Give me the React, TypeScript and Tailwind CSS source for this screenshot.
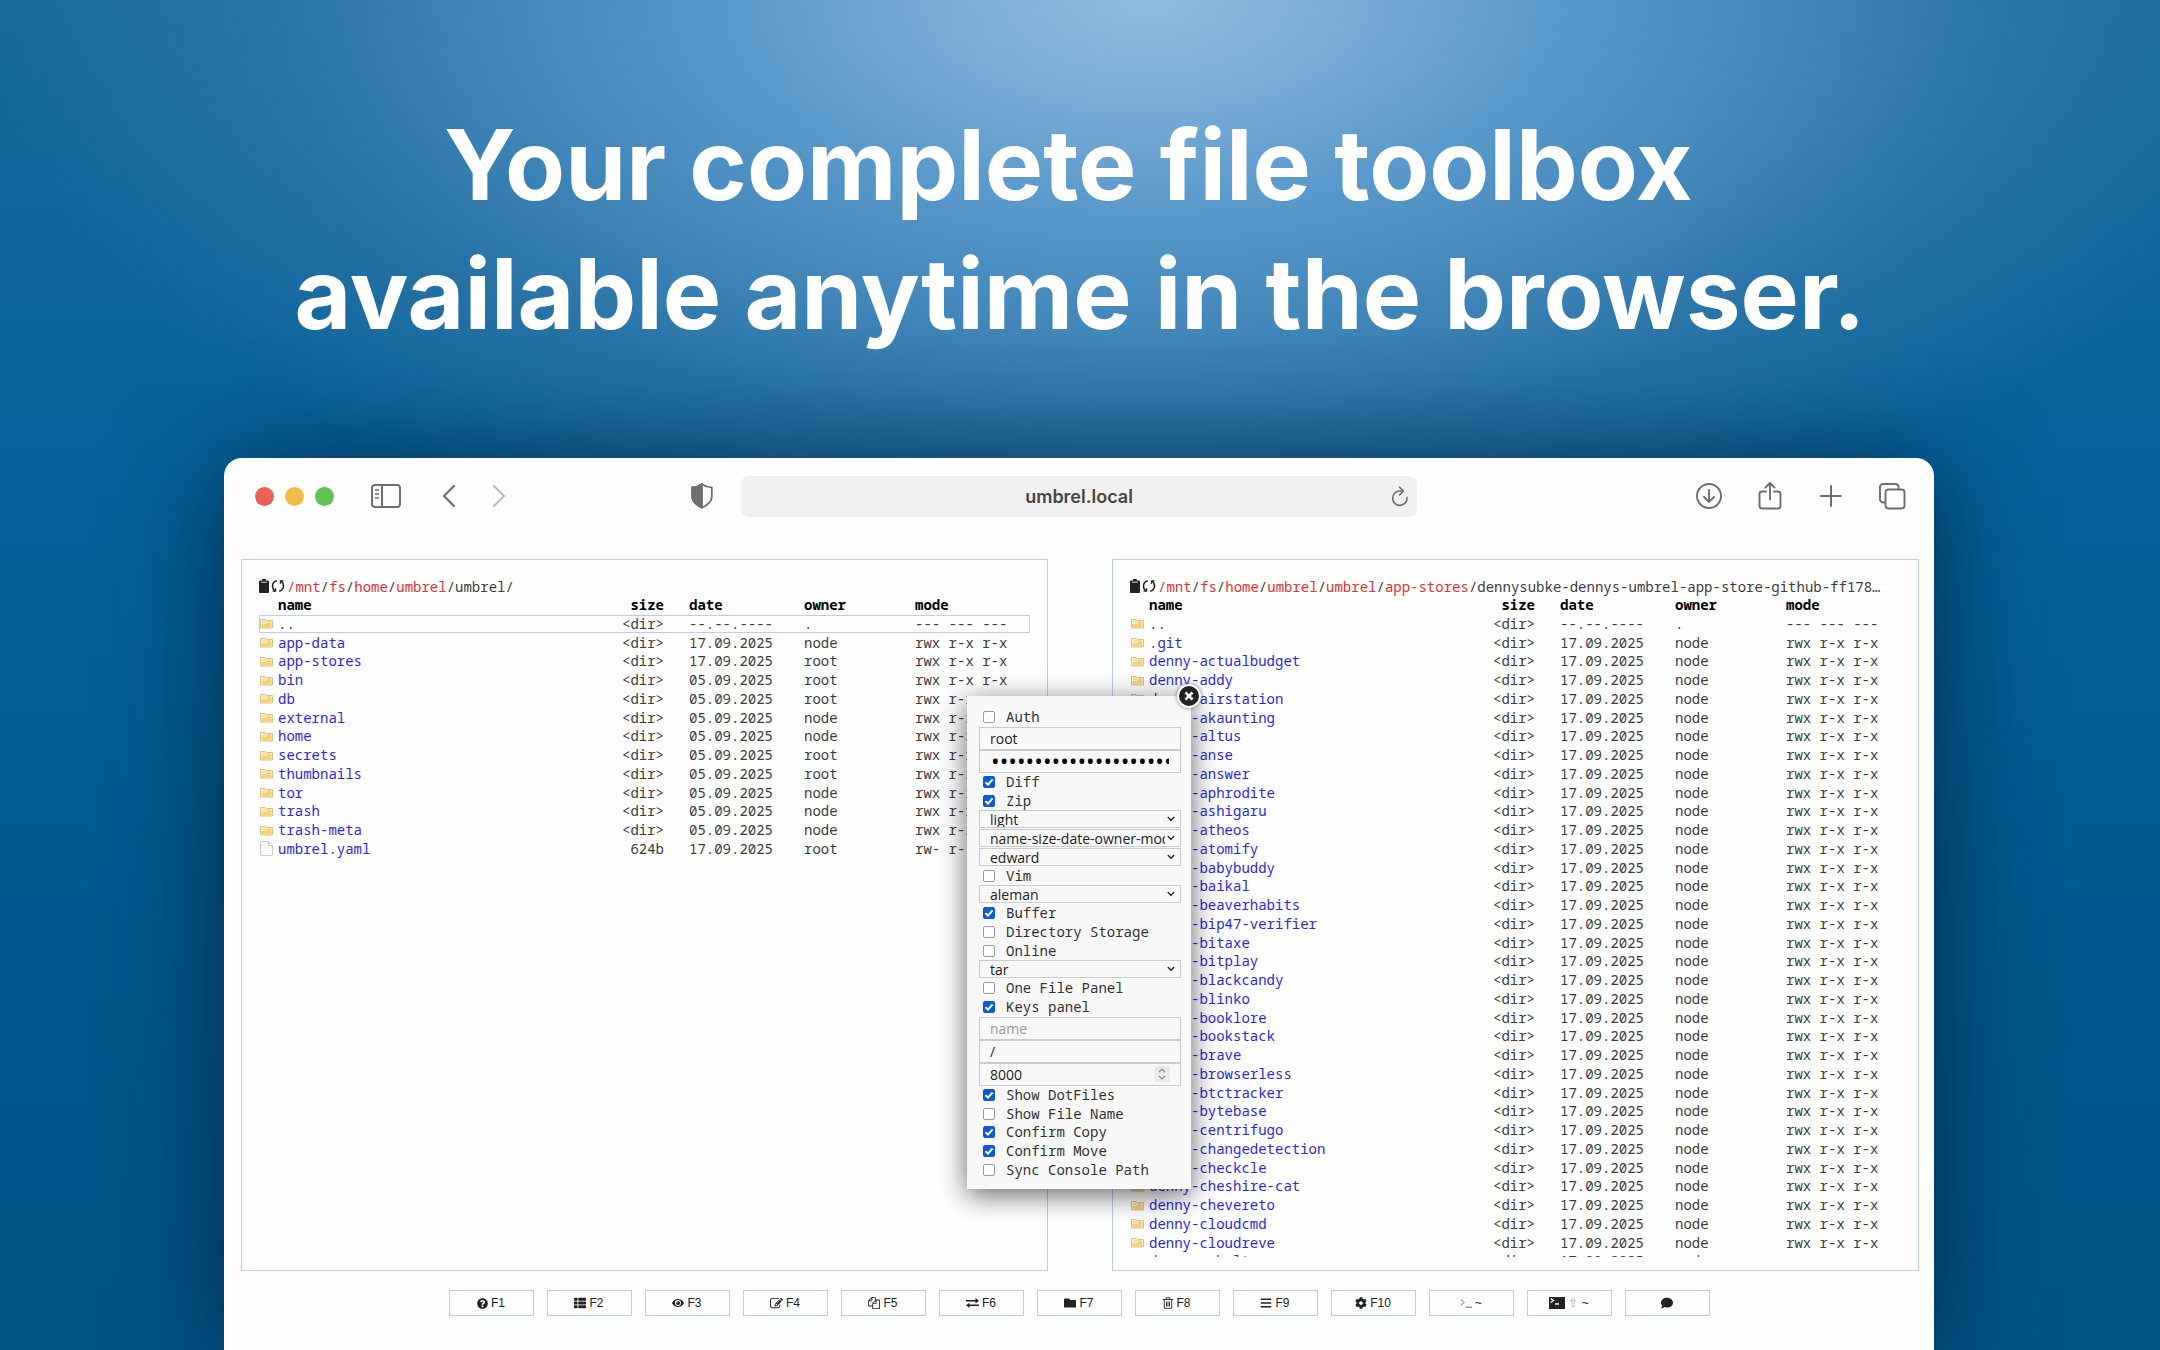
import type { ReactNode } from "react";
import { FaBars, FaCog, FaComment, FaEye, FaFolder, FaQuestionCircle, FaThList } from "react-icons/fa";

type Entry = { name: string; size: string; date: string; owner: string; mode: string };

const parent: Entry = { name: "..", size: "<dir>", date: "--.--.----", owner: ".", mode: "--- --- ---" };

const dir = (name: string, date: string, owner: string): Entry => ({
  name,
  size: "<dir>",
  date,
  owner,
  mode: "rwx r-x r-x",
});

const leftFiles: Entry[] = [
  parent,
  dir("app-data", "17.09.2025", "node"),
  dir("app-stores", "17.09.2025", "root"),
  dir("bin", "05.09.2025", "root"),
  dir("db", "05.09.2025", "root"),
  dir("external", "05.09.2025", "node"),
  dir("home", "05.09.2025", "node"),
  dir("secrets", "05.09.2025", "root"),
  dir("thumbnails", "05.09.2025", "root"),
  dir("tor", "05.09.2025", "node"),
  dir("trash", "05.09.2025", "node"),
  dir("trash-meta", "05.09.2025", "node"),
  { name: "umbrel.yaml", size: "624b", date: "17.09.2025", owner: "root", mode: "rw- r-- r--" },
];

const apps = [
  "actualbudget", "addy", "airstation", "akaunting", "altus", "anse", "answer", "aphrodite", "ashigaru",
  "atheos", "atomify", "babybuddy", "baikal", "beaverhabits", "bip47-verifier", "bitaxe", "bitplay",
  "blackcandy", "blinko", "booklore", "bookstack", "brave", "browserless", "btctracker", "bytebase",
  "centrifugo", "changedetection", "checkcle", "cheshire-cat", "chevereto", "cloudcmd", "cloudreve", "cobalt",
];

const rightFiles: Entry[] = [
  parent,
  dir(".git", "17.09.2025", "node"),
  ...apps.map((app) => dir("denny-" + app, "17.09.2025", "node")),
];

function FolderIcon() {
  return (
    <svg viewBox="0 0 13 11" className="h-[11px] w-[13px]" aria-hidden="true">
      <path d="M.5 10V1.500h4.800l1 1h6.200V10z" fill="#fdf0c8" stroke="#dcc08a" />
      <path d="M1.500 9.500V6h4l1.200-1.300h4.800v4.800z" fill="#f3d27a" />
      <path d="M2.500 4h3.200M7 4h4" stroke="#e2b95c" strokeWidth=".8" />
    </svg>
  );
}

function DocumentIcon() {
  return (
    <svg viewBox="0 0 13 15" className="h-[15px] w-[13px]" aria-hidden="true">
      <path d="M.5 1.500a1 1 0 0 1 1-1h7l4 4v9a1 1 0 0 1-1 1h-10a1 1 0 0 1-1-1z" fill="#f9fafa" stroke="#c9cccd" />
      <path d="M8.500.5v4h4" fill="#eceeee" stroke="#c9cccd" />
    </svg>
  );
}

function ClipboardIcon() {
  return (
    <svg viewBox="0 0 10 14" className="h-[14px] w-[10px]" fill="#222" aria-hidden="true">
      <path d="M1 1.500h2V1a1 1 0 0 1 1-1h2a1 1 0 0 1 1 1v.5h2a1 1 0 0 1 1 1V13a1 1 0 0 1-1 1H1a1 1 0 0 1-1-1V2.500a1 1 0 0 1 1-1z" />
      <path d="M2 3.200h6" stroke="#fff" strokeWidth=".8" />
    </svg>
  );
}

function RefreshIcon() {
  return (
    <svg viewBox="0 0 14 14" className="size-[14px]" fill="none" stroke="#222" strokeWidth="1.500" aria-hidden="true">
      <path d="M5.800 1.700C.8 3 .2 8.800 3.800 11.800M8.200 12.300C13.200 11 13.800 5.200 10.200 2.200" />
      <path d="M1.600 12.200h3V9.200M12.400 1.800h-3v3" strokeWidth="1.200" />
    </svg>
  );
}

const rowGrid =
  "grid h-[1.25em] grid-cols-[19px_minmax(0,1fr)_60px_140px_111px_115px] items-center whitespace-pre text-left";

function Panel({ path, current, files, selected }: { path: string[]; current: string; files: Entry[]; selected?: number }) {
  return (
    <section className="min-h-0 min-w-0 border border-[#b9cdf3] px-[17px] pt-[17px] pb-[13px]">
      <div className="h-full overflow-hidden font-['Noto_Sans_Mono','DejaVu_Sans_Mono',monospace] text-[15px] text-[#3c3c3c]">
        <div className="flex h-[1.25em] items-center overflow-hidden whitespace-nowrap">
          <button type="button" aria-label="Copy path"><ClipboardIcon /></button>
          <button type="button" aria-label="Refresh" className="mx-0.5"><RefreshIcon /></button>
          <span className="text-[14px]">
            <a href="#root" className="text-[#e03030]">/{path[0]}</a>
            {path.slice(1).map((part, i) => (
              <span key={i}>/<a href={"#" + part} className="text-[#e03030]">{part}</a></span>
            ))}
            /{current}
          </span>
        </div>
        <table className="block w-full">
          <thead className="block text-black">
            <tr className={rowGrid}>
              <td />
              <th className="text-[14px] leading-none">name</th>
              <th className="text-right text-[14px] leading-none">size</th>
              <th className="pl-[25px] text-[14px] leading-none">date</th>
              <th className="text-[14px] leading-none">owner</th>
              <th className="text-[14px] leading-none">mode</th>
            </tr>
          </thead>
          <tbody className="block">
            {files.map((file, i) => (
              <tr key={file.name} className={i === selected ? rowGrid + " outline -outline-offset-1 outline-[#b9cdf3]" : rowGrid}>
                <td className="pl-px">{file.size === "<dir>" ? <FolderIcon /> : <DocumentIcon />}</td>
                <td className="text-[14px] leading-none"><a href={"#" + file.name} className="text-[#3026dc]">{file.name}</a></td>
                <td className="text-right text-[14px] leading-none">{file.size}</td>
                <td className="pl-[25px] text-[14px] leading-none">{file.date}</td>
                <td className="text-[14px] leading-none">{file.owner}</td>
                <td className="text-[14px] leading-none">{file.mode}</td>
              </tr>
            ))}
          </tbody>
        </table>
      </div>
    </section>
  );
}

function Check({ label, checked }: { label: string; checked?: boolean }) {
  return (
    <label className="flex h-[1.25em] items-center pl-1">
      <span className="relative mr-[11px] size-3">
        <input
          type="checkbox"
          defaultChecked={checked}
          className="peer block size-3 appearance-none rounded-[2px] border border-[#9a9a9a] bg-white checked:border-[#0b5bd8] checked:bg-[#0b5bd8]"
        />
        <svg viewBox="0 0 12 12" className="pointer-events-none absolute inset-0 hidden size-3 peer-checked:block" fill="none" stroke="#fff" strokeWidth="2" aria-hidden="true">
          <path d="M2.500 6.200 5 8.600l4.600-5.300" />
        </svg>
      </span>
      <span className="font-['Noto_Sans_Mono','DejaVu_Sans_Mono',monospace] text-[14px] leading-none whitespace-nowrap">{label}</span>
    </label>
  );
}

function Choice({ label, value }: { label: string; value: string }) {
  return (
    <div className="relative h-[1.25em]">
      <select aria-label={label} className="block h-[18px] w-full appearance-none border border-[#c9cbcd] bg-[#f8f8f8] pr-[15px] pl-[10px] text-[14px] leading-[18px] text-[#222]">
        <option>{value}</option>
      </select>
      <svg viewBox="0 0 8 6" className="pointer-events-none absolute top-[6px] right-[6px] h-[6px] w-[8px]" fill="none" stroke="#222" strokeWidth="1.300" aria-hidden="true">
        <path d="M.8 1 4 4.300 7.200 1" />
      </svg>
    </div>
  );
}

const field = "block h-[23px] w-full border border-[#c9cbcd] bg-[#f8f8f8] px-[10px] text-[14px] text-[#222] placeholder:text-[#999]";

function SettingsDialog() {
  return (
    <form
      aria-label="Configuration"
      className="absolute top-[137px] left-1/2 w-56 -translate-x-1/2 bg-[#f8f8f8] pt-3 pr-[10px] pb-[10px] pl-3 font-['Open_Sans','Noto_Sans',sans-serif] text-[15px] text-[#333] shadow-[0_6px_26px_rgba(0,0,0,0.6)]"
    >
      <button type="button" aria-label="Close" className="absolute -top-3 -right-[10px] grid size-6 place-items-center rounded-full bg-white shadow-[0_0_4px_rgba(0,0,0,0.5)]">
        <svg viewBox="0 0 20 20" className="size-5" aria-hidden="true">
          <circle cx="10" cy="10" r="10" fill="#222" />
          <path d="m6.500 6.500 7 7m0-7-7 7" stroke="#fff" strokeWidth="2.600" />
        </svg>
      </button>
      <Check label="Auth" />
      <input aria-label="Username" type="text" defaultValue="root" className={field} />
      <input
        aria-label="Password"
        type="password"
        defaultValue="0123456789012345678901234567890123456789"
        className="block h-[23px] w-full border border-[#c9cbcd] bg-[#f8f8f8] px-[11px] text-[23px] text-black"
      />
      <Check label="Diff" checked />
      <Check label="Zip" checked />
      <Choice label="Theme" value="light" />
      <Choice label="Columns" value="name-size-date-owner-mode" />
      <Choice label="Editor" value="edward" />
      <Check label="Vim" />
      <Choice label="Menu" value="aleman" />
      <Check label="Buffer" checked />
      <Check label="Directory Storage" />
      <Check label="Online" />
      <Choice label="Packer" value="tar" />
      <Check label="One File Panel" />
      <Check label="Keys panel" checked />
      <input aria-label="Name" type="text" placeholder="name" className={field} />
      <input aria-label="Root" type="text" defaultValue="/" className={field} />
      <div className="relative">
        <input aria-label="Port" type="number" defaultValue="8000" className={field + " [appearance:textfield]"} />
        <svg viewBox="0 0 16 16" className="pointer-events-none absolute top-[3px] right-[11px] size-4" fill="none" stroke="#8a8a8a" strokeWidth="1.200" aria-hidden="true">
          <path d="M0 0h16v16H0z" fill="#ebebed" stroke="none" />
          <path d="m5 6 3-3 3 3M5 10l3 3 3-3" />
        </svg>
      </div>
      <Check label="Show DotFiles" checked />
      <Check label="Show File Name" />
      <Check label="Confirm Copy" checked />
      <Check label="Confirm Move" checked />
      <Check label="Sync Console Path" />
    </form>
  );
}

function EditIcon() {
  return (
    <svg viewBox="0 0 1792 1792" className="size-[13px]" fill="currentColor" aria-hidden="true">
      <path d="M888 1184l116-116-152-152-116 116v56h96v96h56zm440-720q-16-16-33 1l-350 350q-17 17-1 33t33-1l350-350q17-17 1-33zm80 594v190q0 119-84.500 203.500t-203.500 84.500h-832q-119 0-203.500-84.500t-84.500-203.500v-832q0-119 84.500-203.500t203.500-84.500h832q63 0 117 25 15 7 18 23 3 17-9 29l-49 49q-14 14-32 8-23-6-45-6h-832q-66 0-113 47t-47 113v832q0 66 47 113t113 47h832q66 0 113-47t47-113v-126q0-13 9-22l64-64q15-15 35-7t20 29zm-96-738l288 288-672 672h-288v-288zm444 132l-92 92-288-288 92-92q28-28 68-28t68 28l152 152q28 28 28 68t-28 68z" />
    </svg>
  );
}

function CopyIcon() {
  return (
    <svg viewBox="0 0 1792 1792" className="size-[12px]" fill="currentColor" aria-hidden="true">
      <path d="M1696 384q40 0 68 28t28 68v1216q0 40-28 68t-68 28h-960q-40 0-68-28t-28-68v-288h-544q-40 0-68-28t-28-68v-672q0-40 20-88t48-76l408-408q28-28 76-48t88-20h416q40 0 68 28t28 68v328q68-40 128-40h416zm-544 213l-299 299h299v-299zm-640-384l-299 299h299v-299zm196 647l316-316v-416h-384v416q0 40-28 68t-68 28h-416v640h512v-256q0-40 20-88t48-76zm956 804v-1152h-384v416q0 40-28 68t-68 28h-416v640h896z" />
    </svg>
  );
}

function MoveIcon() {
  return (
    <svg viewBox="0 0 13 10" className="h-[10px] w-[13px]" fill="currentColor" aria-hidden="true">
      <path d="M0 2h9.500V0L13 2.800 9.500 5.500v-2H0zM13 8H3.500v2L0 7.200 3.500 4.800v1.700H13z" />
    </svg>
  );
}

function TrashIcon() {
  return (
    <svg viewBox="0 0 10 12" className="h-[12px] w-[10px]" fill="none" stroke="currentColor" aria-hidden="true">
      <path d="M0 2.500h10M3.200 2.300V.8h3.600v1.500M1.300 2.500v8.800h7.400V2.500M3.500 4.500v5M5 4.500v5M6.500 4.500v5" strokeWidth=".9" />
    </svg>
  );
}

function PromptIcon() {
  return (
    <svg viewBox="0 0 12 10" className="h-[10px] w-[12px]" fill="none" stroke="#666" aria-hidden="true">
      <path d="m1 1.500 3 3-3 3M5.500 9.200H12" />
    </svg>
  );
}

function TerminalIcon() {
  return (
    <svg viewBox="0 0 16 12" className="h-[12px] w-[16px]" aria-hidden="true">
      <path d="M0 0h16v12H0z" fill="#222" />
      <path d="m1.500 1.500 3 2-3 2M6 7h4" fill="none" stroke="#fff" strokeWidth="1.300" />
    </svg>
  );
}

const keys: { name: string; icon: ReactNode; label: ReactNode }[] = [
  { name: "Help", icon: <FaQuestionCircle className="size-[11px]" />, label: "F1" },
  { name: "Rename", icon: <FaThList className="size-[12px]" />, label: "F2" },
  { name: "View", icon: <FaEye className="size-[12px]" />, label: "F3" },
  { name: "Edit", icon: <EditIcon />, label: "F4" },
  { name: "Copy", icon: <CopyIcon />, label: "F5" },
  { name: "Move", icon: <MoveIcon />, label: "F6" },
  { name: "New folder", icon: <FaFolder className="size-[12px]" />, label: "F7" },
  { name: "Delete", icon: <TrashIcon />, label: "F8" },
  { name: "Menu", icon: <FaBars className="size-[12px]" />, label: "F9" },
  { name: "Config", icon: <FaCog className="size-[12px]" />, label: "F10" },
  { name: "Console", icon: <PromptIcon />, label: "~" },
  { name: "Terminal", icon: <TerminalIcon />, label: <><span className="text-[#aaa]">⇧</span> ~</> },
  { name: "Contact", icon: <FaComment className="size-[12px]" />, label: null },
];

function Toolbar() {
  return (
    <header className="grid h-[76px] grid-cols-[1fr_676px_1fr] items-center text-[#6e6e6e]">
      <div className="flex items-center pl-[31px]">
        <div className="flex gap-[11px]">
          <span className="size-[19px] rounded-full bg-[#ea6158]" />
          <span className="size-[19px] rounded-full bg-[#f2bb45]" />
          <span className="size-[19px] rounded-full bg-[#5fc351]" />
        </div>
        <button type="button" aria-label="Sidebar" className="ml-[37px]">
          <svg viewBox="0 0 30 24" className="h-6 w-[30px]" fill="none" stroke="currentColor" strokeWidth="2" aria-hidden="true">
            <rect x="1" y="1" width="28" height="22" rx="3" />
            <path d="M11 1v22" />
            <path d="M4 6h4M4 10h4M4 14h4" strokeWidth="1.500" />
          </svg>
        </button>
        <button type="button" aria-label="Back" className="ml-[41px]">
          <svg viewBox="0 0 14 24" className="h-6 w-[14px]" fill="none" stroke="currentColor" strokeWidth="2.200" strokeLinecap="round" strokeLinejoin="round" aria-hidden="true">
            <path d="M12 2 2 12l10 10" />
          </svg>
        </button>
        <button type="button" aria-label="Forward" className="ml-9 text-[#bdbdbd]">
          <svg viewBox="0 0 14 24" className="h-6 w-[14px]" fill="none" stroke="currentColor" strokeWidth="2.200" strokeLinecap="round" strokeLinejoin="round" aria-hidden="true">
            <path d="m2 2 10 10L2 22" />
          </svg>
        </button>
        <button type="button" aria-label="Privacy report" className="mr-7 ml-auto">
          <svg viewBox="0 0 22 26" className="h-[26px] w-[22px]" fill="none" stroke="currentColor" strokeWidth="1.800" strokeLinejoin="round" aria-hidden="true">
            <path d="M11 1.200c2.800 1.900 6 3 9.800 3.200V14c0 4.600-4.300 8-9.800 10.700C5.500 22 1.200 18.600 1.200 14V4.400C5 4.200 8.200 3.100 11 1.200z" />
            <path d="M11 1.200v23.500C5.500 22 1.200 18.600 1.200 14V4.400C5 4.200 8.200 3.100 11 1.200z" fill="currentColor" />
          </svg>
        </button>
      </div>
      <div className="relative">
        <input
          aria-label="Address"
          type="text"
          defaultValue="umbrel.local"
          className="block h-[41px] w-full rounded-lg bg-[#f1f1f1] text-center font-['Inter',sans-serif] text-[18px] font-semibold text-[#454545]"
        />
        <button type="button" aria-label="Reload" className="absolute top-[10px] right-2">
          <svg viewBox="0 0 18 22" className="h-[22px] w-[18px]" fill="none" stroke="currentColor" strokeWidth="1.600" strokeLinecap="round" strokeLinejoin="round" aria-hidden="true">
            <path d="M16 11.500A7.200 7.200 0 1 1 8.800 5h3" />
            <path d="m8.500 1.200 4 3.800-4 4" />
          </svg>
        </button>
      </div>
      <div className="flex items-center justify-end gap-[33px] pr-[28px]">
        <button type="button" aria-label="Downloads">
          <svg viewBox="0 0 28 28" className="size-7" fill="none" stroke="currentColor" strokeWidth="1.900" strokeLinecap="round" strokeLinejoin="round" aria-hidden="true">
            <circle cx="14" cy="14" r="12" />
            <path d="M14 8v12m-5-5 5 5 5-5" />
          </svg>
        </button>
        <button type="button" aria-label="Share">
          <svg viewBox="0 0 28 28" className="size-7" fill="none" stroke="currentColor" strokeWidth="1.900" strokeLinecap="round" strokeLinejoin="round" aria-hidden="true">
            <path d="M10 9.500H6a2.500 2.500 0 0 0-2.500 2.500v12A2.500 2.500 0 0 0 6 26.500h16a2.500 2.500 0 0 0 2.500-2.500V12A2.500 2.500 0 0 0 22 9.500h-4" />
            <path d="M14 17.500V1m-4.500 4.500L14 1l4.500 4.500" />
          </svg>
        </button>
        <button type="button" aria-label="New tab">
          <svg viewBox="0 0 28 28" className="size-7" fill="none" stroke="currentColor" strokeWidth="2" strokeLinecap="round" aria-hidden="true">
            <path d="M14 4v20M4 14h20" />
          </svg>
        </button>
        <button type="button" aria-label="Tab overview">
          <svg viewBox="0 0 28 28" className="size-7" fill="none" stroke="currentColor" strokeWidth="1.900" strokeLinejoin="round" aria-hidden="true">
            <rect x="7.500" y="7.500" width="19" height="19" rx="3" />
            <path d="M7.500 20.500H5a3 3 0 0 1-3-3V5a3 3 0 0 1 3-3h12.500a3 3 0 0 1 3 3v2.500" />
          </svg>
        </button>
      </div>
    </header>
  );
}

export default function App() {
  return (
    <main className="flex h-screen flex-col overflow-hidden bg-[radial-gradient(ellipse_54%_44%_at_53%_0%,#90bcdf,#78abd6_18%,#5898cb_36%,#4488bb_54%,rgba(50,120,170,0.7)_74%,transparent),linear-gradient(#17699b,#05619a_35%,#00588c_70%,#005488)]">
      <h1 className="pt-[100px] pb-[100px] text-center font-['Inter',sans-serif] text-[98px] leading-[129px] font-bold text-white">
        Your complete file toolbox&nbsp;
        <br />
        available anytime in the browser.
      </h1>
      <div className="mr-[226px] ml-56 flex min-h-0 flex-1 flex-col rounded-t-[18px] bg-[#fefefe] shadow-[0_10px_110px_rgba(0,25,50,0.75)]">
        <Toolbar />
        <div className="relative mt-[25px] grid min-h-0 flex-1 grid-cols-2 gap-16 pr-[15px] pl-[17px]">
          <Panel path={["mnt", "fs", "home", "umbrel"]} current="umbrel/" files={leftFiles} selected={0} />
          <Panel
            path={["mnt", "fs", "home", "umbrel", "umbrel", "app-stores"]}
            current="dennysubke-dennys-umbrel-app-store-github-ff178…"
            files={rightFiles}
          />
          <SettingsDialog />
        </div>
        <nav aria-label="Function keys" className="flex justify-center gap-[13px] pt-[19px] pb-[34px] font-['Liberation_Sans',Arial,sans-serif] text-[12px] text-[#222]">
          {keys.map((key) => (
            <button key={key.name} type="button" aria-label={key.name} className="flex h-[26px] w-[85px] items-center justify-center gap-[3px] border border-[#b9cdf3]">
              {key.icon}
              {key.label && <span>{key.label}</span>}
            </button>
          ))}
        </nav>
      </div>
    </main>
  );
}
